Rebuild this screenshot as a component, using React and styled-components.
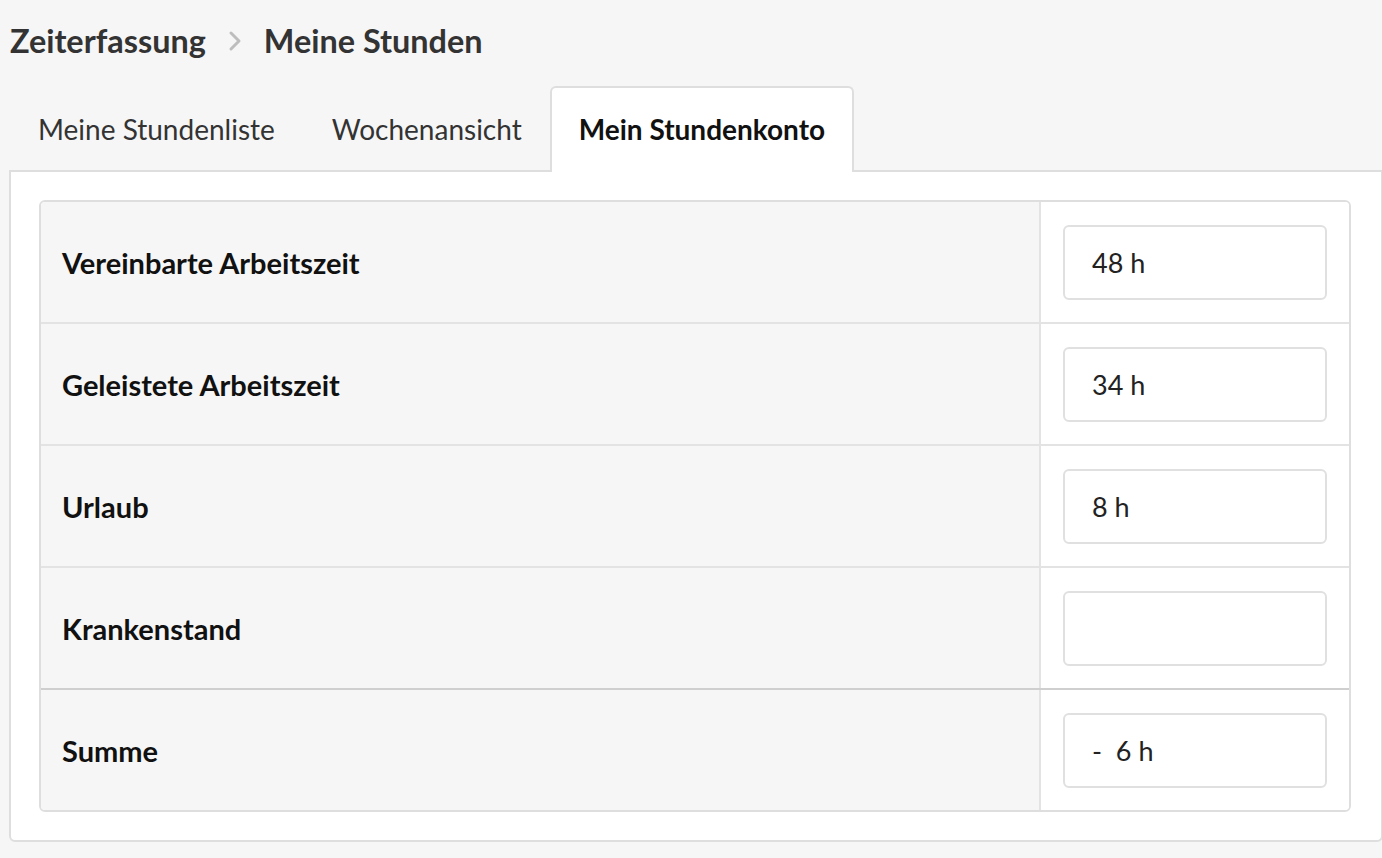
import styled, { createGlobalStyle } from 'styled-components'

const Global = createGlobalStyle`
  html, body {
    margin: 0;
    background: #f6f6f6;
    overflow: hidden;
  }
  body {
    font-family: Lato, "Open Sans", sans-serif;
    color: #222;
  }
`

const Page = styled.main`
  padding: 0 0 0 9px;
  width: 1374px;
`

const Crumbs = styled.h1`
  display: flex;
  align-items: center;
  gap: 22px;
  margin: 0;
  height: 81px;
  padding-left: 1px;
  font-size: 32.4px;
  font-weight: 700;
  color: #333;
`

const Chevron = () => (
  <svg width="14" height="22" viewBox="0 0 14 22">
    <path d="M3 3 L11 11 L3 19" fill="none" stroke="#bdbdbd" strokeWidth="3" strokeLinecap="round" strokeLinejoin="round" />
  </svg>
)

const Tabs = styled.nav`
  display: flex;
  gap: 2px;
  margin-top: 5px;
  position: relative;
  z-index: 1;
  margin-bottom: -2px;
`

const Tab = styled.div`
  height: 82px;
  display: flex;
  align-items: center;
  padding: 0 ${p => (p.active ? 27 : 24)}px 2px 27px;
  font-size: 28px;
  font-weight: ${p => (p.active ? 700 : 400)};
  color: ${p => (p.active ? '#111' : '#333')};
  background: ${p => (p.active ? '#fff' : 'transparent')};
  border: 2px solid ${p => (p.active ? '#dedede' : 'transparent')};
  border-bottom: none;
  border-radius: 6px 6px 0 0;
`

const Panel = styled.section`
  background: #fff;
  border: 2px solid #dedede;
  border-radius: 0 0 6px 6px;
  padding: 28px 30px 28px 28px;
`

const Table = styled.div`
  border: 2px solid #dedede;
  border-radius: 6px;
  overflow: hidden;
`

const Row = styled.div`
  display: grid;
  grid-template-columns: 1fr 308px;
  height: ${p => (p.first ? 120 : 122)}px;
  border-top: ${p => (p.first ? 'none' : p.total ? '2px solid #cfcfcf' : '2px solid #e3e3e3')};
  box-sizing: border-box;
`

const Label = styled.div`
  background: #f6f6f6;
  display: flex;
  align-items: center;
  padding-left: 21px;
  font-size: 29px;
  font-weight: 700;
  color: #111;
  border-right: 2px solid #e3e3e3;
`

const Cell = styled.div`
  display: flex;
  align-items: center;
  padding: 0 22px;
  background: #fff;
`

const Value = styled.div`
  width: 100%;
  height: 75px;
  box-sizing: border-box;
  border: 2px solid #e0e0e0;
  border-radius: 6px;
  display: flex;
  align-items: center;
  padding-left: 27px;
  font-size: 27px;
  color: #222;
  white-space: pre;
`

const rows = [
  { label: 'Vereinbarte Arbeitszeit', value: '48 h' },
  { label: 'Geleistete Arbeitszeit', value: '34 h' },
  { label: 'Urlaub', value: '8 h' },
  { label: 'Krankenstand', value: '' },
  { label: 'Summe', value: '-  6 h', total: true },
]

export default function App() {
  return (
    <Page>
      <Global />
      <Crumbs>
        <span>Zeiterfassung</span>
        <Chevron />
        <span>Meine Stunden</span>
      </Crumbs>
      <Tabs>
        <Tab>Meine Stundenliste</Tab>
        <Tab>Wochenansicht</Tab>
        <Tab active>Mein Stundenkonto</Tab>
      </Tabs>
      <Panel>
        <Table>
          {rows.map((r, i) => (
            <Row key={r.label} first={i === 0} total={r.total}>
              <Label>{r.label}</Label>
              <Cell>
                <Value>{r.value}</Value>
              </Cell>
            </Row>
          ))}
        </Table>
      </Panel>
    </Page>
  )
}
